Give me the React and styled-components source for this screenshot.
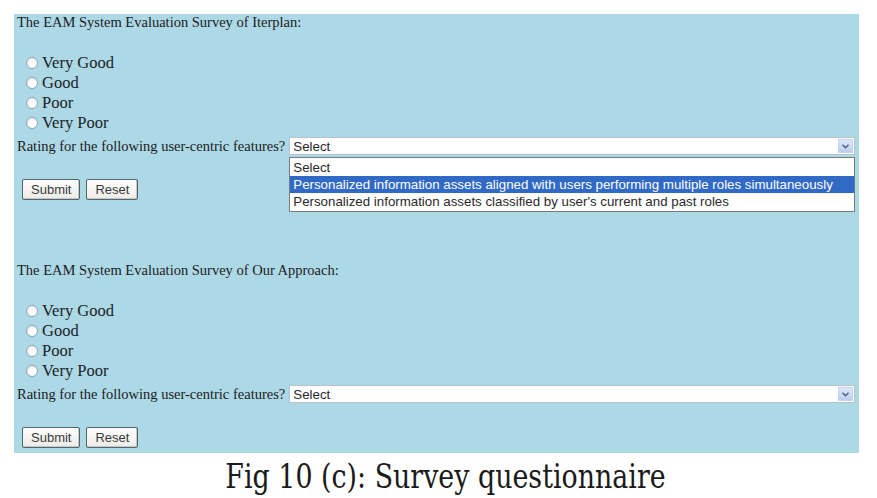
import React from 'react'
import styled, { createGlobalStyle } from 'styled-components'

const GlobalStyle = createGlobalStyle`
  html, body {
    margin: 0;
    padding: 0;
    background: #fff;
  }
`

const Page = styled.div`
  width: 877px;
  height: 498px;
  overflow: hidden;
  padding: 14px 0 0 14px;
  box-sizing: border-box;
`

const Panel = styled.div`
  width: 845px;
  height: 439px;
  background: #add8e6;
  display: flex;
  flex-direction: column;
  gap: 62px;
`

const Section = styled.form`
  display: flex;
  flex-direction: column;
  padding-left: 3px;
  margin: 0;
  font-family: "Liberation Serif", "Times New Roman", serif;
  font-size: 14.5px;
  color: #1c1c24;
`

const Heading = styled.div`
  height: 16px;
  line-height: 16px;
`

const Options = styled.div`
  margin-top: 23px;
  display: flex;
  flex-direction: column;
`

const Option = styled.label`
  height: 20px;
  display: flex;
  align-items: center;
  gap: 4px;
  padding-left: 9px;
  font-size: 16.5px;
`

const Radio = styled.span`
  width: 10px;
  height: 10px;
  border-radius: 50%;
  border: 1px solid #98a8b6;
  background: radial-gradient(circle at 60% 60%, #ffffff 30%, #d9e0e8 100%);
`

const RatingRow = styled.div`
  margin-top: 4px;
  height: 18px;
  display: flex;
  align-items: center;
  gap: 4px;
  padding-right: 4px;
`

const SelectBox = styled.div`
  position: relative;
  flex: 1;
  height: 18px;
  box-sizing: border-box;
  border: 1px solid #b8c2cc;
  background: #fff;
  display: flex;
  align-items: center;
  font-family: "Liberation Sans", Arial, sans-serif;
  font-size: 13.3px;
  color: #2a2a2a;
  padding-left: 3px;
`

const SelectValue = styled.span`
  flex: 1;
`

const Arrow = styled.span`
  width: 15px;
  height: 14px;
  margin-right: 1px;
  background: linear-gradient(#dce7fa, #bccff2);
  border: 1px solid #c5d4ef;
  box-sizing: border-box;
  display: flex;
  align-items: center;
  justify-content: center;
`

const Menu = styled.div`
  position: absolute;
  top: 19px;
  left: -1px;
  right: -1px;
  border: 1px solid #7a7a7a;
  background: #fff;
  display: flex;
  flex-direction: column;
  padding: 1px 0;
`

const MenuItem = styled.div`
  height: 17px;
  line-height: 17px;
  padding-left: 3px;
  white-space: nowrap;
  background: ${p => (p.$active ? '#3169c6' : 'transparent')};
  color: ${p => (p.$active ? '#fff' : '#2a2a2a')};
`

const Buttons = styled.div`
  margin-top: 24px;
  display: flex;
  gap: 6px;
  padding-left: 5px;
`

const Button = styled.button`
  height: 21px;
  padding: 0 8px;
  font-family: "Liberation Sans", Arial, sans-serif;
  font-size: 13px;
  color: #3a3a3a;
  background: linear-gradient(#ffffff, #ecebe6);
  border: 1px solid #4f6475;
  border-radius: 2px;
  box-shadow: inset -1px -1px 0 #c8c6bd;
`

const Caption = styled.div`
  margin-top: 3px;
  text-align: center;
  font-family: "DejaVu Serif", "Liberation Serif", serif;
  font-size: 34px;
  color: #1a1a1a;
  line-height: 40px;
  white-space: nowrap;
  transform: scaleX(0.79);
`

const features = [
  'Select',
  'Personalized information assets aligned with users performing multiple roles simultaneously',
  "Personalized information assets classified by user's current and past roles",
]

const ratings = ['Very Good', 'Good', 'Poor', 'Very Poor']

const Chevron = () => (
  <svg width="7" height="5" viewBox="0 0 7 5">
    <path d="M0.5 0.8 L3.5 3.8 L6.5 0.8" fill="none" stroke="#4d6185" strokeWidth="1.4" />
  </svg>
)

const Survey = ({ name, open }) => (
  <Section>
    <Heading>The EAM System Evaluation Survey of {name}:</Heading>
    <Options>
      {ratings.map(r => (
        <Option key={r}>
          <Radio />
          {r}
        </Option>
      ))}
    </Options>
    <RatingRow>
      <span>Rating for the following user-centric features?</span>
      <SelectBox>
        <SelectValue>Select</SelectValue>
        <Arrow><Chevron /></Arrow>
        {open && (
          <Menu>
            {features.map((f, i) => (
              <MenuItem key={f} $active={i === 1}>{f}</MenuItem>
            ))}
          </Menu>
        )}
      </SelectBox>
    </RatingRow>
    <Buttons>
      <Button type="button">Submit</Button>
      <Button type="button">Reset</Button>
    </Buttons>
  </Section>
)

export default function App() {
  return (
    <Page>
      <GlobalStyle />
      <Panel>
        <Survey name="Iterplan" open />
        <Survey name="Our Approach" />
      </Panel>
      <Caption>Fig 10 (c): Survey questionnaire</Caption>
    </Page>
  )
}
